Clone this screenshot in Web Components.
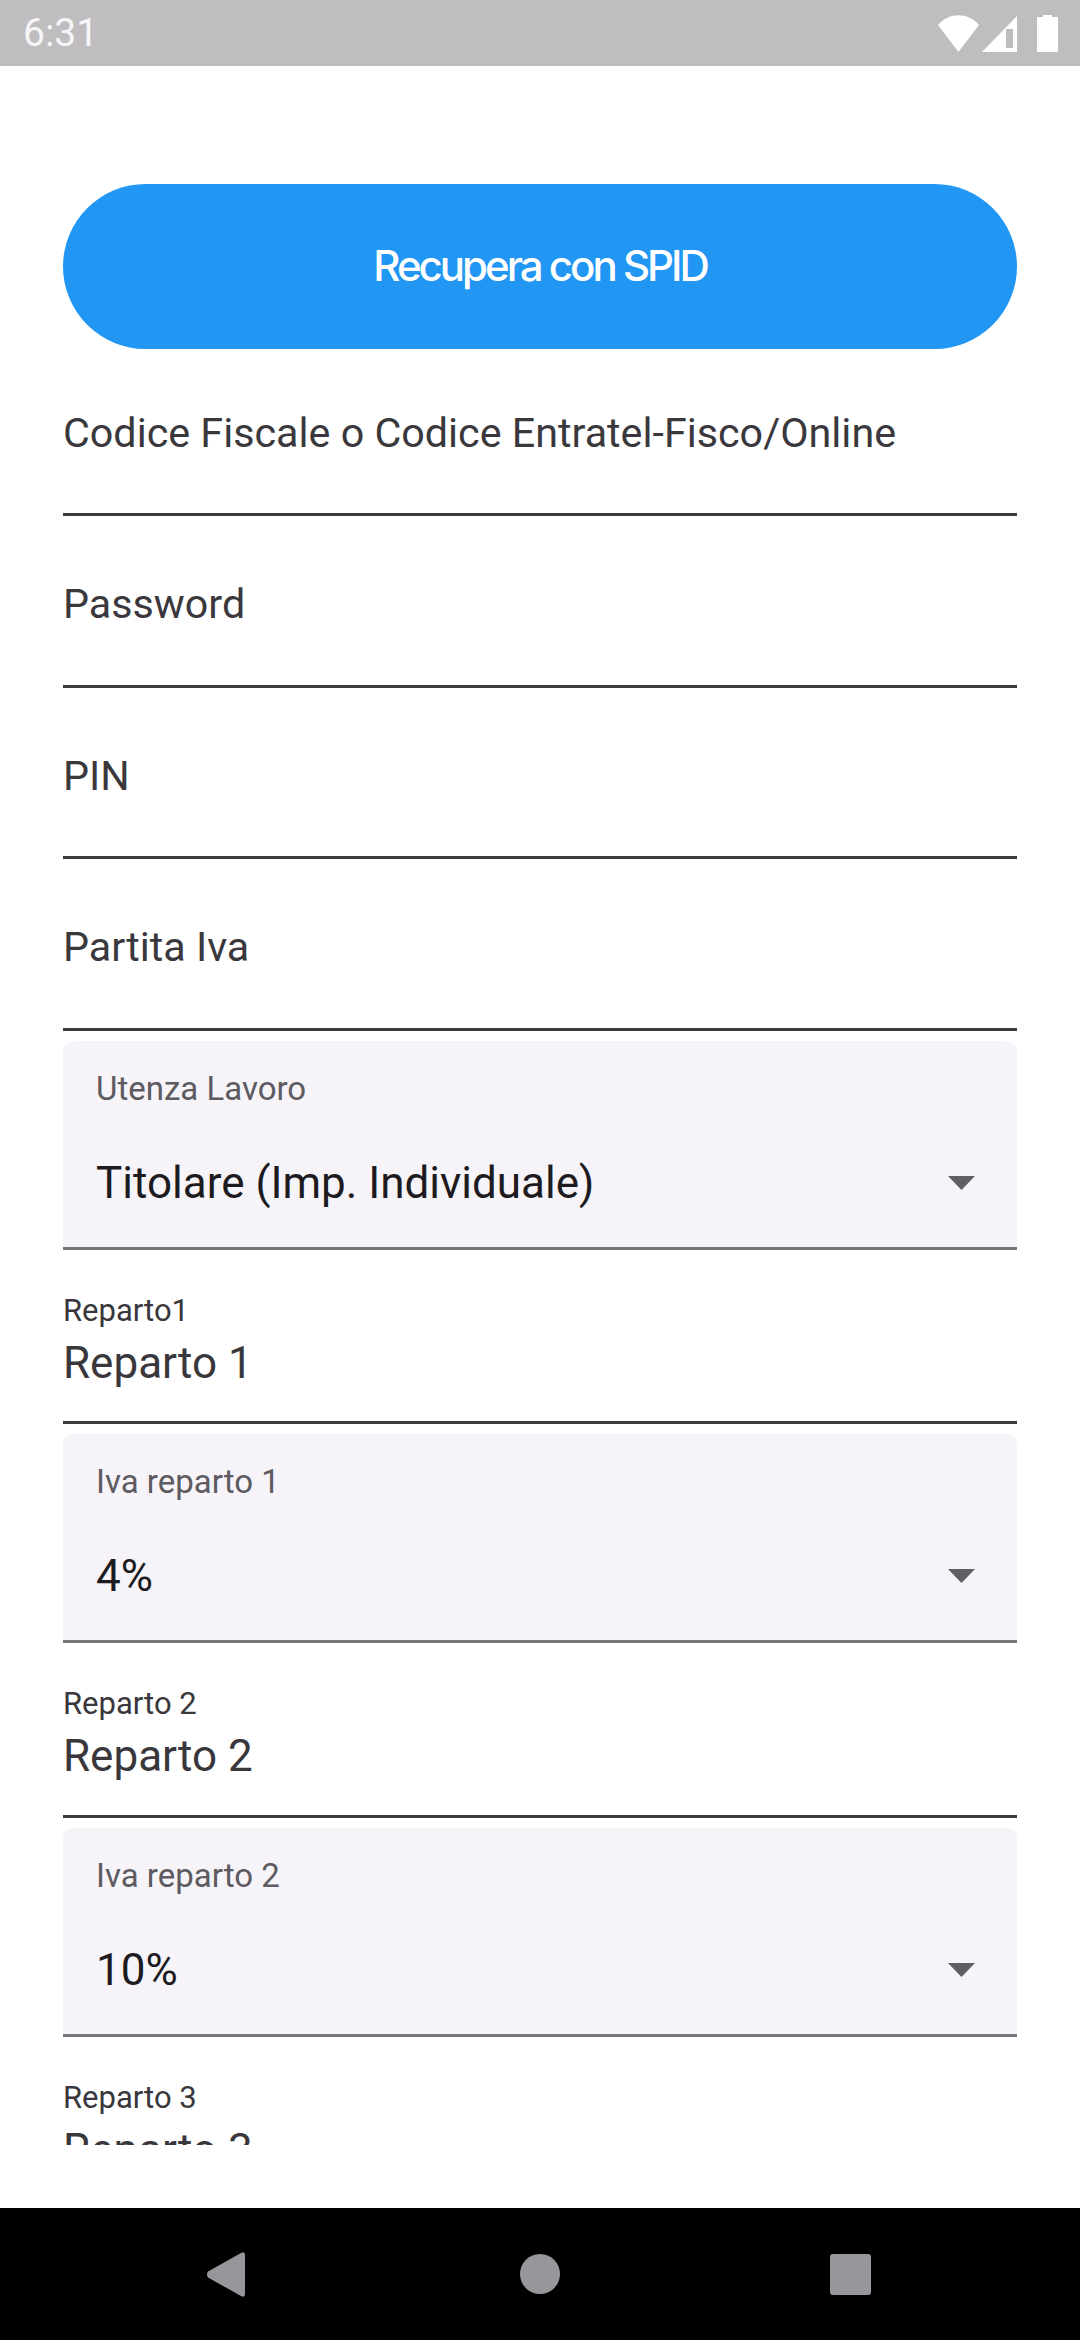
<!DOCTYPE html>
<html>
<head>
<meta charset="utf-8">
<style>
  html, body { margin: 0; background: #fff; }
  body { font-family: Roboto, "Noto Sans", sans-serif; width: 1080px; height: 2340px; overflow: hidden; }
  #page { display: flex; flex-direction: column; height: 2340px; }
</style>
</head>
<body>
<div id="page">
  <status-bar time="6:31"></status-bar>
  <form-view>
    <spid-button>Recupera con SPID</spid-button>
    <plain-field first>Codice Fiscale o Codice Entratel-Fisco/Online</plain-field>
    <plain-field>Password</plain-field>
    <plain-field>PIN</plain-field>
    <plain-field>Partita Iva</plain-field>
    <drop-field label="Utenza Lavoro">Titolare (Imp. Individuale)</drop-field>
    <value-field label="Reparto1">Reparto 1</value-field>
    <drop-field label="Iva reparto 1">4%</drop-field>
    <value-field label="Reparto 2">Reparto 2</value-field>
    <drop-field label="Iva reparto 2">10%</drop-field>
    <value-field label="Reparto 3">Reparto 3</value-field>
  </form-view>
  <nav-bar></nav-bar>
</div>
<script>
customElements.define('status-bar', class extends HTMLElement {
  constructor() {
    super()
    const shadow = this.attachShadow({ mode: 'open' })
    shadow.innerHTML = `<style>
      :host{
        display:flex;
        flex:none;
        height:66px;
        background:#bfbdc0;
        align-items:center;
        justify-content:space-between;
        padding:0 22px 0 23px;
        color:#f6f5f7;
      }
      .time{
        font-size:39px;
      }
      svg{
        display:block;
      }
    </style>
    <div class="time"></div>
    <svg width="120" height="37" viewBox="0 0 120 37">
      <path fill="#fff" d="M0 10 C11 -3 30 -3 41 10 L20.500 37 Z"/>
      <path fill="#fff" fill-rule="evenodd" d="M44 37 L79 1 V37 Z M68 14 V33 H75 V14 Z"/>
      <path fill="#fff" d="M99 3 Q99 2 100 2 H105 V0 H114 V2 H119 Q120 2 120 3 V36 Q120 37 119 37 H100 Q99 37 99 36 Z"/>
    </svg>`
    shadow.querySelector('.time').textContent = this.getAttribute('time')
  }
})

customElements.define('form-view', class extends HTMLElement {
  constructor() {
    super()
    const shadow = this.attachShadow({ mode: 'open' })
    shadow.innerHTML = `<style>
      :host{
        display:block;
        flex:1;
        min-height:0;
        padding-bottom:63px;
        background:#fff;
      }
      .scroll{
        height:100%;
        overflow:hidden;
        padding:118px 63px 0;
        box-sizing:border-box;
      }
    </style>
    <div class="scroll"><slot></slot></div>`
  }
})

customElements.define('spid-button', class extends HTMLElement {
  constructor() {
    super()
    const shadow = this.attachShadow({ mode: 'open' })
    shadow.innerHTML = `<style>
      :host{
        display:flex;
        height:165px;
        box-sizing:border-box;
        padding-bottom:2px;
        border-radius:83px;
        background:#2196f3;
        color:#fff;
        align-items:center;
        justify-content:center;
        font-family:Inter, Roboto, sans-serif;
        font-size:42px;
        font-weight:500;
        letter-spacing:-3px;
      }
    </style>
    <slot></slot>`
  }
})

customElements.define('plain-field', class extends HTMLElement {
  constructor() {
    super()
    const shadow = this.attachShadow({ mode: 'open' })
    shadow.innerHTML = `<style>
      :host{
        display:flex;
        height:167px;
        margin-top:4.500px;
        padding-top:3px;
        box-sizing:border-box;
        border-bottom:3px solid #3d3b40;
        align-items:center;
        color:#3a383d;
        font-size:41.250px;
      }
      :host([first]){
        margin-top:0;
      }
    </style>
    <slot></slot>`
  }
})

customElements.define('drop-field', class extends HTMLElement {
  constructor() {
    super()
    const shadow = this.attachShadow({ mode: 'open' })
    shadow.innerHTML = `<style>
      :host{
        display:block;
        height:209px;
        margin-top:10px;
        box-sizing:border-box;
        background:#f6f4f8;
        border-radius:10px 10px 0 0;
        border-bottom:3px solid #77757a;
        padding:0 33px;
      }
      .label{
        padding-top:28px;
        height:40px;
        line-height:40px;
        font-size:33px;
        color:#5d5b61;
      }
      .row{
        display:flex;
        align-items:center;
        justify-content:space-between;
        margin-top:44px;
        height:60px;
        font-size:44px;
        color:#1d1b20;
      }
      svg{
        display:block;
        margin-right:9px;
      }
    </style>
    <div class="label"></div>
    <div class="row"><span><slot></slot></span>
      <svg width="27" height="14" viewBox="0 0 27 14"><path fill="#5f5e62" d="M0 0 H27 L13.500 14 Z"/></svg>
    </div>`
    shadow.querySelector('.label').textContent = this.getAttribute('label')
  }
})

customElements.define('value-field', class extends HTMLElement {
  constructor() {
    super()
    const shadow = this.attachShadow({ mode: 'open' })
    shadow.innerHTML = `<style>
      :host{
        display:block;
        height:174.500px;
        box-sizing:border-box;
        border-bottom:3px solid #3d3b40;
        padding-top:43px;
      }
      .label{
        height:36px;
        line-height:36px;
        font-size:31px;
        color:#39373c;
      }
      .value{
        margin-top:4px;
        height:60px;
        line-height:60px;
        font-size:44px;
        color:#39373c;
      }
    </style>
    <div class="label"></div>
    <div class="value"><slot></slot></div>`
    shadow.querySelector('.label').textContent = this.getAttribute('label')
  }
})

customElements.define('nav-bar', class extends HTMLElement {
  constructor() {
    super()
    const shadow = this.attachShadow({ mode: 'open' })
    shadow.innerHTML = `<style>
      :host{
        display:flex;
        flex:none;
        height:132px;
        background:#000;
        align-items:center;
        justify-content:space-between;
        padding:0 209px 0 207px;
        box-sizing:border-box;
      }
      svg{
        display:block;
      }
      .circle{
        width:40px;
        height:40px;
        margin-left:5px;
        border-radius:50%;
        background:#98969a;
      }
      .square{
        width:41px;
        height:41px;
        border-radius:3px;
        background:#98969a;
      }
    </style>
    <svg width="38" height="45" viewBox="0 0 38 45"><path fill="#98969a" d="M1 19.500 L34 1 Q38 -1 38 3 V42 Q38 46 34 44 L1 25.500 Q-1 22.500 1 19.500 Z"/></svg>
    <div class="circle"></div>
    <div class="square"></div>`
  }
})
</script>
</body>
</html>
